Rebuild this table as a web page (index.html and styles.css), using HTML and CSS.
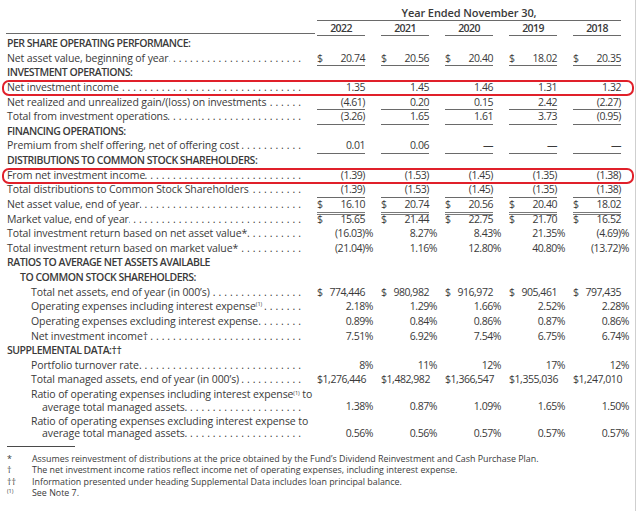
FILE: index.html
```html
<!DOCTYPE html>
<html>
<head>
<meta charset="utf-8">
<link rel="stylesheet" href="styles.css">
</head>
<body>
<div class="page">
  <div class="row title"><div class="hd">Year Ended November 30,</div></div>
  <div class="row years">
    <div class="lbl rule"></div>
    <div class="yr">2022</div><div class="yr">2021</div><div class="yr">2020</div><div class="yr">2019</div><div class="yr">2018</div>
  </div>

  <div class="row"><div class="lbl b">PER SHARE OPERATING PERFORMANCE:</div></div>
  <div class="row">
    <div class="lbl"><span>Net asset value, beginning of year</span><span class="dots"></span></div>
    <div class="v u"><span>$</span><span>20.74</span></div>
    <div class="v u"><span>$</span><span>20.56</span></div>
    <div class="v u"><span>$</span><span>20.40</span></div>
    <div class="v u"><span>$</span><span>18.02</span></div>
    <div class="v u"><span>$</span><span>20.35</span></div>
  </div>
  <div class="row"><div class="lbl b">INVESTMENT OPERATIONS:</div></div>
  <div class="row box">
    <div class="lbl"><span>Net investment income</span><span class="dots"></span></div>
    <div class="v r">1.35</div><div class="v r">1.45</div><div class="v r">1.46</div><div class="v r">1.31</div><div class="v r">1.32</div>
  </div>
  <div class="row">
    <div class="lbl"><span>Net realized and unrealized gain/(loss) on investments</span><span class="dots"></span></div>
    <div class="v r u">(4.61)</div><div class="v r u">0.20</div><div class="v r u">0.15</div><div class="v r u">2.42</div><div class="v r u">(2.27)</div>
  </div>
  <div class="row">
    <div class="lbl"><span>Total from investment operations</span><span class="dots"></span></div>
    <div class="v r u">(3.26)</div><div class="v r u">1.65</div><div class="v r u">1.61</div><div class="v r u">3.73</div><div class="v r u">(0.95)</div>
  </div>
  <div class="row"><div class="lbl b">FINANCING OPERATIONS:</div></div>
  <div class="row">
    <div class="lbl"><span>Premium from shelf offering, net of offering cost</span><span class="dots"></span></div>
    <div class="v r u">0.01</div><div class="v r u">0.06</div><div class="v r u">—</div><div class="v r u">—</div><div class="v r u">—</div>
  </div>
  <div class="row"><div class="lbl b">DISTRIBUTIONS TO COMMON STOCK SHAREHOLDERS:</div></div>
  <div class="row box">
    <div class="lbl"><span>From net investment income</span><span class="dots"></span></div>
    <div class="v r">(1.39)</div><div class="v r">(1.53)</div><div class="v r">(1.45)</div><div class="v r">(1.35)</div><div class="v r">(1.38)</div>
  </div>
  <div class="row">
    <div class="lbl"><span>Total distributions to Common Stock Shareholders</span><span class="dots"></span></div>
    <div class="v r u">(1.39)</div><div class="v r u">(1.53)</div><div class="v r u">(1.45)</div><div class="v r u">(1.35)</div><div class="v r u">(1.38)</div>
  </div>
  <div class="row">
    <div class="lbl"><span>Net asset value, end of year</span><span class="dots"></span></div>
    <div class="v uu"><span>$</span><span>16.10</span></div>
    <div class="v uu"><span>$</span><span>20.74</span></div>
    <div class="v uu"><span>$</span><span>20.56</span></div>
    <div class="v uu"><span>$</span><span>20.40</span></div>
    <div class="v uu"><span>$</span><span>18.02</span></div>
  </div>
  <div class="row">
    <div class="lbl"><span>Market value, end of year</span><span class="dots"></span></div>
    <div class="v"><span>$</span><span>15.65</span></div>
    <div class="v"><span>$</span><span>21.44</span></div>
    <div class="v"><span>$</span><span>22.75</span></div>
    <div class="v"><span>$</span><span>21.70</span></div>
    <div class="v"><span>$</span><span>16.52</span></div>
  </div>
  <div class="row">
    <div class="lbl"><span>Total investment return based on net asset value*</span><span class="dots"></span></div>
    <div class="v r">(16.03)<span class="pc">%</span></div><div class="v r">8.27<span class="pc">%</span></div><div class="v r">8.43<span class="pc">%</span></div><div class="v r">21.35<span class="pc">%</span></div><div class="v r">(4.69)<span class="pc">%</span></div>
  </div>
  <div class="row">
    <div class="lbl"><span>Total investment return based on market value*</span><span class="dots"></span></div>
    <div class="v r">(21.04)<span class="pc">%</span></div><div class="v r">1.16<span class="pc">%</span></div><div class="v r">12.80<span class="pc">%</span></div><div class="v r">40.80<span class="pc">%</span></div><div class="v r">(13.72)<span class="pc">%</span></div>
  </div>
  <div class="row"><div class="lbl b">RATIOS TO AVERAGE NET ASSETS AVAILABLE</div></div>
  <div class="row"><div class="lbl b in1">TO COMMON STOCK SHAREHOLDERS:</div></div>
  <div class="row">
    <div class="lbl in2"><span>Total net assets, end of year (in 000’s)</span><span class="dots"></span></div>
    <div class="v"><span>$</span><span>774,446</span></div>
    <div class="v"><span>$</span><span>980,982</span></div>
    <div class="v"><span>$</span><span>916,972</span></div>
    <div class="v"><span>$</span><span>905,461</span></div>
    <div class="v"><span>$</span><span>797,435</span></div>
  </div>
  <div class="row">
    <div class="lbl in2"><span>Operating expenses including interest expense<sup class="fn">(1)</sup></span><span class="dots"></span></div>
    <div class="v r">2.18<span class="pc">%</span></div><div class="v r">1.29<span class="pc">%</span></div><div class="v r">1.66<span class="pc">%</span></div><div class="v r">2.52<span class="pc">%</span></div><div class="v r">2.28<span class="pc">%</span></div>
  </div>
  <div class="row">
    <div class="lbl in2"><span>Operating expenses excluding interest expense</span><span class="dots"></span></div>
    <div class="v r">0.89<span class="pc">%</span></div><div class="v r">0.84<span class="pc">%</span></div><div class="v r">0.86<span class="pc">%</span></div><div class="v r">0.87<span class="pc">%</span></div><div class="v r">0.86<span class="pc">%</span></div>
  </div>
  <div class="row">
    <div class="lbl in2"><span>Net investment income†</span><span class="dots"></span></div>
    <div class="v r">7.51<span class="pc">%</span></div><div class="v r">6.92<span class="pc">%</span></div><div class="v r">7.54<span class="pc">%</span></div><div class="v r">6.75<span class="pc">%</span></div><div class="v r">6.74<span class="pc">%</span></div>
  </div>
  <div class="row"><div class="lbl b">SUPPLEMENTAL DATA:††</div></div>
  <div class="row">
    <div class="lbl in2"><span>Portfolio turnover rate</span><span class="dots"></span></div>
    <div class="v r">8<span class="pc">%</span></div><div class="v r">11<span class="pc">%</span></div><div class="v r">12<span class="pc">%</span></div><div class="v r">17<span class="pc">%</span></div><div class="v r">12<span class="pc">%</span></div>
  </div>
  <div class="row">
    <div class="lbl in2"><span>Total managed assets, end of year (in 000’s)</span><span class="dots"></span></div>
    <div class="v"><span>$</span><span>1,276,446</span></div>
    <div class="v"><span>$</span><span>1,482,982</span></div>
    <div class="v"><span>$</span><span>1,366,547</span></div>
    <div class="v"><span>$</span><span>1,355,036</span></div>
    <div class="v"><span>$</span><span>1,247,010</span></div>
  </div>
  <div class="row two">
    <div class="lbl2 in2">
      <div>Ratio of operating expenses including interest expense<sup class="fn">(1)</sup> to</div>
      <div class="lbl in3"><span>average total managed assets</span><span class="dots"></span></div>
    </div>
    <div class="v r">1.38<span class="pc">%</span></div><div class="v r">0.87<span class="pc">%</span></div><div class="v r">1.09<span class="pc">%</span></div><div class="v r">1.65<span class="pc">%</span></div><div class="v r">1.50<span class="pc">%</span></div>
  </div>
  <div class="row two">
    <div class="lbl2 in2">
      <div>Ratio of operating expenses excluding interest expense to</div>
      <div class="lbl in3"><span>average total managed assets</span><span class="dots"></span></div>
    </div>
    <div class="v r">0.56<span class="pc">%</span></div><div class="v r">0.56<span class="pc">%</span></div><div class="v r">0.57<span class="pc">%</span></div><div class="v r">0.57<span class="pc">%</span></div><div class="v r">0.57<span class="pc">%</span></div>
  </div>

  <div class="notes">
    <div class="note"><span class="mk">*</span><span>Assumes reinvestment of distributions at the price obtained by the Fund’s Dividend Reinvestment and Cash Purchase Plan.</span></div>
    <div class="note"><span class="mk">†</span><span>The net investment income ratios reflect income net of operating expenses, including interest expense.</span></div>
    <div class="note"><span class="mk">††</span><span>Information presented under heading Supplemental Data includes loan principal balance.</span></div>
    <div class="note"><span class="mk sm">(1)</span><span>See Note 7.</span></div>
  </div>
</div>
</body>
</html>
```

FILE: styles.css
```css
* { box-sizing: border-box; margin: 0; padding: 0; }
html, body { background: #fff; }
body {
  font-family: "Open Sans", "Liberation Sans", sans-serif;
  font-size: 10.5px;
  color: #3a3a3a;
}
.page {
  width: 636px;
  height: 511px;
  border-right: 1px solid #cfcfcf;
  padding: 6px 0 0 7px;
  overflow: hidden;
}
.row {
  display: grid;
  grid-template-columns: 294px repeat(5, 48px);
  column-gap: 16px;
  height: 14.64px;
  line-height: 14.64px;
  white-space: nowrap;
}
.title { height: 15px; line-height: 14px; }
.title .hd {
  grid-column: 2 / 7;
  text-align: center;
  font-size: 11px;
  font-weight: 600;
  letter-spacing: -0.1px;
  border-bottom: 1px solid #6a6a6a;
}
.years { height: 15px; line-height: 14px; }
.years .rule {
  border-bottom: 1px solid #6a6a6a;
  margin-right: -14px;
  margin-bottom: 2px;
  margin-left: -1px;
}
.yr {
  text-align: center;
  font-weight: 600;
  letter-spacing: -0.6px;
  border-bottom: 1px solid #6a6a6a;
}
.lbl {
  display: flex;
  min-width: 0;
  letter-spacing: -0.1px;
}
.lbl > span:first-child { flex: none; }
.b { font-weight: 600; letter-spacing: -0.5px; }
.in1 { padding-left: 13px; }
.in2 { padding-left: 24px; }
.in3 { padding-left: 11px; }
.lbl2 { letter-spacing: -0.1px; padding-top: 1px; }
.dots {
  flex: 1;
  overflow: hidden;
  direction: rtl;
  padding-left: 4px;
  letter-spacing: 0.1px;
}
.dots::before {
  content: ". . . . . . . . . . . . . . . . . . . . . . . . . . . . . . . . . . . . . . . . . . . . . . . . . . . . . . . . . . . . . . . . . . . . .";
}
.v {
  display: flex;
  justify-content: space-between;
  letter-spacing: -0.45px;
}
.v.r { justify-content: flex-end; }
.u { border-bottom: 1px solid #6a6a6a; }
.uu { border-bottom: 3px double #7a7a7a; }
.pc { margin-right: -8px; }
.fn {
  font-size: 5.5px;
  vertical-align: top;
  line-height: 10px;
  letter-spacing: 0;
}
.box { position: relative; }
.box::after {
  content: "";
  position: absolute;
  left: -5.5px;
  right: 1px;
  top: 0;
  bottom: -1.5px;
  border: 2.5px solid #e0202a;
  border-radius: 7px;
}
.two {
  height: 26.8px;
  line-height: 12.6px;
}
.two .v {
  align-self: end;
  line-height: 14.64px;
}
.notes {
  margin-top: 5px;
  padding-top: 6px;
  border-top: 1px solid #4a4a4a;
  width: 68px;
  white-space: nowrap;
}
.note {
  display: flex;
  font-size: 8.9px;
  line-height: 11.6px;
}
.mk { width: 25px; flex: none; }
.mk.sm { font-size: 5.5px; line-height: 9px; }
```
